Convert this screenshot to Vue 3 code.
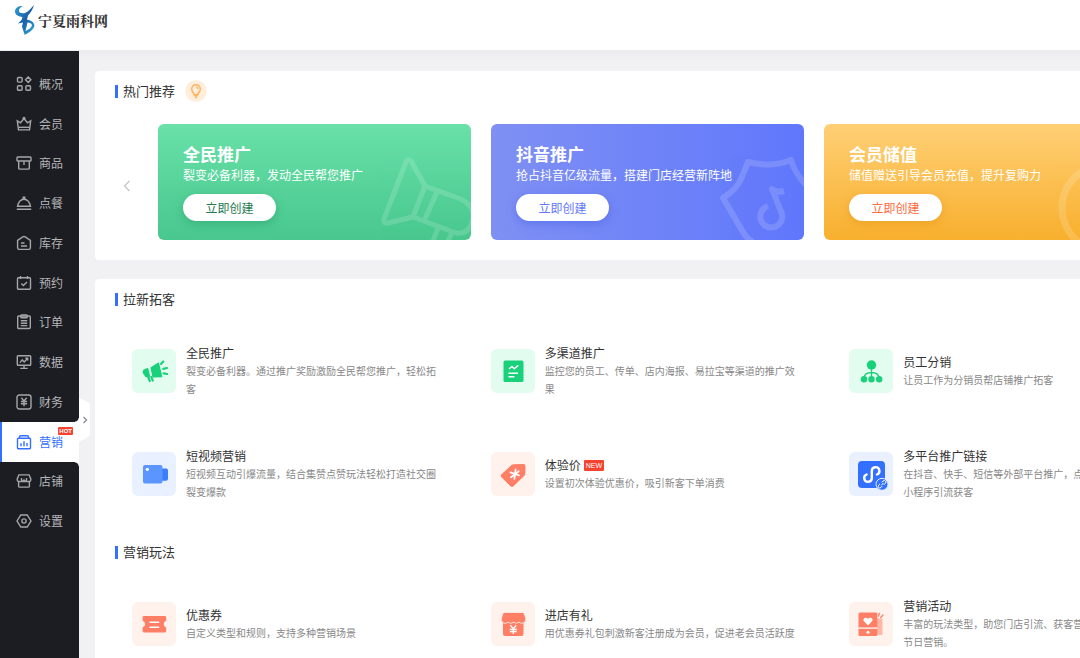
<script setup>
const nav = [
  { label: '概况', icon: '<rect x="1.5" y="1.5" width="4.6" height="4.6" rx="1"/><path d="M12.2 1l2.7 2.8-2.7 2.8-2.7-2.8z"/><rect x="1.5" y="9.7" width="4.6" height="4.6" rx="1"/><rect x="9.9" y="9.7" width="4.6" height="4.6" rx="1"/>' },
  { label: '会员', icon: '<path d="M1.3 4.8l3.2 2L8 2.6l3.5 4.2 3.2-2-1.2 9.1h-11z"/><path d="M2.4 11.3h11.2"/><circle cx="8" cy="2.3" r=".9"/>' },
  { label: '商品', icon: '<rect x="1" y="2" width="14" height="4" rx=".8"/><path d="M2.7 6v7.2q0 .9.9.9h8.8q.9 0 .9-.9V6M8 6.5v3.4"/>' },
  { label: '点餐', icon: '<path d="M1.5 11.3C2.5 7 5 4.3 8 4.3s5.500 2.700 6.500 7zM.8 14.300h14.400"/><circle cx="8" cy="2.900" r="1"/>' },
  { label: '库存', icon: '<path d="M1.600 5.300L6.800 1.900q1.200-.7 2.400 0l5.200 3.400v7.500q0 1.600-1.600 1.600H3.200q-1.600 0-1.600-1.600z"/><path d="M5 8h3.500M5 11h6"/>' },
  { label: '预约', icon: '<rect x="1.500" y="2.800" width="13" height="11.500" rx="1"/><path d="M4.500 1v3M11.500 1v3M5.300 8.500l2.100 2.100 3.600-3.500"/>' },
  { label: '订单', icon: '<rect x="1.700" y="2" width="12.600" height="12.500" rx="1"/><rect x="4.800" y="1" width="6.400" height="2.800" rx=".8"/><path d="M4.800 6.800h6.400M4.800 9.200h6.400M4.800 11.600h6.400"/>' },
  { label: '数据', icon: '<rect x="1.300" y="1.700" width="13.400" height="9.600" rx=".8"/><path d="M8 11.500v2.700M4.300 14.400h7.400M4 8.600l2.300-2.700 1.900 2 3.300-3.400M9.300 4.200h2.400v2.300"/>' },
  { label: '财务', icon: '<rect x="1" y="1" width="14" height="14" rx="2.200"/><path d="M5.300 3.800L8 7l2.700-3.200M4.900 7.500h6.200M4.900 9.800h6.200M8 7v5.300"/>' },
  { label: '营销', active: true, icon: '<rect x="1.500" y="4.200" width="13" height="10.500" rx="1"/><path d="M3.400 4V3.200q0-1.500 1.500-1.500h6.200q1.500 0 1.500 1.500V4M5 9.300v3M8 7.300v5M11 9v3.300"/>' },
  { label: '店铺', icon: '<path d="M2.900 1.900h10.200l1.700 4v1.200q0 1.400-1.400 1.400H2.600q-1.400 0-1.400-1.400V5.900z"/><path d="M2.600 8.700v4.200q0 1.200 1.200 1.200h8.400q1.200 0 1.200-1.200V8.700M5.500 5v2q0 1 1 1t1.500-1q.5 1 1.500 1t1-1V5"/>' },
  { label: '设置', icon: '<path d="M4.800 2h6.400L15 8l-3.800 6H4.800L1 8z"/><circle cx="8" cy="8" r="2.100"/>' }
]

const hot = [
  {
    tone: 'green', title: '全民推广', text: '裂变必备利器，发动全民帮您推广',
    art: '<g stroke-width="5"><path d="M267 62L253 37q-3-3-5 1l-22 57q-1 5 4 4l25-6z"/><path d="M267 62l33 12q16 6 15 20-3 17-17 15l-43-16"/><path d="M279 68l-12 27M280 104l-5 13M294 109l-4 8"/></g>'
  },
  {
    tone: 'blue', title: '抖音推广', text: '抢占抖音亿级流量，搭建门店经营新阵地',
    art: '<path stroke-width="6" d="M262 118q-6-3-10-10l-20-34q14-9 18-19l7-17q24 6 43-2 4 14 16 26"/><path stroke-width="6" d="M277 82a11 11 0 1 0 14 8l-10-25q5 4 12 2"/>'
  },
  {
    tone: 'orange', title: '会员储值', text: '储值赠送引导会员充值，提升复购力',
    art: '<circle cx="281" cy="84" r="43" stroke-width="7"/><path stroke-width="6" d="M266 62l15 18 15-18M262 84h38M262 98h38M281 82v34"/>'
  }
]

const megaphone = '<g fill="#19d17b" stroke="#19d17b" stroke-linecap="round" stroke-linejoin="round"><path stroke-width="1.600" d="M19.300 18.800l7-4.500 3.200 13.200-8.300.3z"/><path stroke-width="1.600" d="M11.800 21.500l3.700-1.700 1.900 7.300-3.400.3-2.600-3.900z"/><path stroke-width="2.200" d="M16 27.500l1.800 4.500M19.300 28l1.500 3.600M29 15l2.200-2.400M31.300 19.800l3.700-.8M31.500 24.300l3.600.7"/></g>'
const report = '<rect x="12.500" y="11.500" width="20" height="21.500" rx="1.500" fill="#19d17b"/><path d="M18 20l3-2.500 2.300 2.300 4-3.600M17.500 24.300h9.500M17.500 27.700h6" stroke="#fff" stroke-width="1.400" fill="none"/>'
const team = '<g fill="#19d17b"><circle cx="22.500" cy="16" r="4.700"/><circle cx="15" cy="30.300" r="3.200"/><circle cx="22.500" cy="30.300" r="3.200"/><circle cx="30.200" cy="30.300" r="3.200"/></g><path d="M22.500 18v12M15 29q.5-5.500 7.500-5.500T30.200 29" fill="none" stroke="#19d17b" stroke-width="1.300"/>'
const video = '<rect x="29" y="16.500" width="7" height="12.300" rx="2" fill="#3b7dfa"/><rect x="11" y="13" width="19.500" height="18.500" rx="2" fill="#5b95ff"/><circle cx="15.300" cy="17.300" r="1.600" fill="#fff"/>'
const tag = '<path d="M10.500 22.300l9.700-9q1.200-1.100 2.800-1.100l9.300-.2q2.200 0 2.200 2.200l-.2 7q0 1.600-1.200 2.700l-10.600 10.400q-1.500 1.400-3 0l-9-9q-1.500-1.500 0-3z" fill="#ff7f66"/><path d="M24.600 17.300l-1.200 9.500M19.500 20.400l8.500 3M20 25.300l7.700-6" stroke="#fff" stroke-width="1.800" stroke-linecap="round"/>'
const link = '<rect x="9" y="9" width="27" height="27" rx="4" fill="#3370ff"/><path d="M17.600 22.500a3.800 3.800 0 1 0 5.200 3.500V19a3.800 3.800 0 1 1 5.200 3.500" fill="none" stroke="#fff" stroke-width="2.400" stroke-linecap="round"/><circle cx="33" cy="32.300" r="6" fill="#3370ff" stroke="#e8efff" stroke-width="1"/><path d="M32.300 33.300l2.200-2.400M32.800 30.300l1.300-1.300a1.600 1.600 0 0 1 2.300 2.300l-1.500 1.500M33.300 34l-1.400 1.500a1.600 1.600 0 0 1-2.300-2.300l1.400-1.400" fill="none" stroke="#fff" stroke-width="1"/>'
const coupon = '<path d="M12 14h21q1.200 0 1.200 1.200v3.600a3.500 3.500 0 0 0 0 6.700v3.600q0 1.400-1.200 1.400H12q-1.400 0-1.400-1.400v-3.600a3.500 3.500 0 0 0 0-6.700v-3.600Q10.600 14 12 14z" fill="#ff7f66"/><path d="M17.500 20.200h9.700M17.500 25.200h9.700" stroke="#fff" stroke-width="1.600"/>'
const shop = '<path d="M12 21h20.500v11q0 2-2 2H14q-2 0-2-2z" fill="#ff7f66"/><path d="M13.500 10.500h18q1 0 1.500.8l1.700 4.500q.8 3-1.700 5-2.700 1.400-5-.6-2.500 2.400-5.300 0-3 2.400-5.500 0-2.700 2.200-5.200.6-2.500-2-1.600-5l1.600-4.500q.5-.8 1.500-.8z" fill="#ff7f66" stroke="#fff1ec" stroke-width=".8"/><path d="M19.300 23.300l3 3.400 3-3.400M18.800 27.500h7M18.800 29.700h7M22.300 27v5" fill="none" stroke="#fff" stroke-width="1.300"/>'
const event = '<rect x="24" y="16.500" width="9.500" height="16.500" rx="1" fill="#ffb8a8"/><rect x="9.500" y="10.500" width="18.800" height="23.500" rx="1.500" fill="#ff7f66"/><path d="M19 23.500l-4-4.200c-2-2.600 1.800-5.200 4-2.500 2.200-2.700 6-.1 4 2.500z" fill="#fff"/><path d="M9.500 26.200h18.800" stroke="#fff" stroke-width="1.200"/><circle cx="19" cy="30.300" r="1.500" fill="#fff"/><path d="M29.500 14l.8-2.600M31.700 15.500l2.300-2.400" stroke="#ff7f66" stroke-width="1.400" stroke-linecap="round"/>'

const sections = [
  {
    title: '拉新拓客',
    items: [
      { title: '全民推广', text: '裂变必备利器。通过推广奖励激励全民帮您推广，轻松拓客', tone: 'mint', icon: megaphone },
      { title: '多渠道推广', text: '监控您的员工、传单、店内海报、易拉宝等渠道的推广效果', tone: 'mint', icon: report },
      { title: '员工分销', text: '让员工作为分销员帮店铺推广拓客', tone: 'mint', icon: team },
      { title: '短视频营销', text: '短视频互动引爆流量，结合集赞点赞玩法轻松打造社交圈裂变爆款', tone: 'sky', icon: video },
      { title: '体验价', badge: 'NEW', text: '设置初次体验优惠价，吸引新客下单消费', tone: 'peach', icon: tag },
      { title: '多平台推广链接', text: '在抖音、快手、短信等外部平台推广，点击即可打开您的小程序引流获客', tone: 'sky', icon: link }
    ]
  },
  {
    title: '营销玩法',
    items: [
      { title: '优惠券', text: '自定义类型和规则，支持多种营销场景', tone: 'peach', icon: coupon },
      { title: '进店有礼', text: '用优惠券礼包刺激新客注册成为会员，促进老会员活跃度', tone: 'peach', icon: shop },
      { title: '营销活动', text: '丰富的玩法类型，助您门店引流、获客营销促活，玩转各节日营销。', tone: 'peach', icon: event }
    ]
  }
]
</script>

<template>
  <div class="page">
    <header class="top">
      <a href="#" class="brand">
        <svg width="22" height="32" viewBox="0 0 22 32" aria-hidden="true">
          <defs>
            <linearGradient id="brandFill" x1="0" y1="0" x2="1" y2="1">
              <stop offset="0" stop-color="#2ba3dc" />
              <stop offset=".5" stop-color="#1b5fa8" />
              <stop offset="1" stop-color="#2fb0e0" />
            </linearGradient>
          </defs>
          <g fill="url(#brandFill)">
            <path d="M8.500 2C4 2 1 4 1 7.500c0 3 3 5 7.500 5.500l-1 3L4 19.500l5-1-1 4 2.500 8 2-7.500 1-4.500c2.500.2 4 1 4.500 2.500-.3 2.500-3 4.500-6.500 6l-1 4c5-2.500 9-5 10-9.500-.5-3.500-3.500-5-7.500-6l1-4C17 8 19 5 20 1c-3 3-5 6.500-9 8-3 .5-5.500 0-6-1.500C4.500 5 6 3.500 8.500 2z" />
          </g>
        </svg>
        <span>宁夏雨科网</span>
      </a>
    </header>

    <div class="body">
      <aside class="side">
        <nav>
          <a v-for="n in nav" :key="n.label" href="#" :class="{ active: n.active }">
            <svg width="16" height="16" viewBox="0 0 16 16" aria-hidden="true" v-html="n.icon"></svg>
            <span>{{ n.label }}</span>
            <em v-if="n.active">HOT</em>
          </a>
        </nav>
        <button class="fold" aria-label="展开菜单">
          <svg width="11" height="44" viewBox="0 0 11 44">
            <path d="M0 0l9 4q2 1 2 3v29q0 2-2 3l-9 5z" fill="#fff" />
            <path d="M4.500 19l3 3-3 3" fill="none" stroke="#888b91" stroke-width="1.300" />
          </svg>
        </button>
      </aside>

      <main>
        <section class="panel">
          <div class="head">
            <h2>热门推荐</h2>
            <svg width="22" height="22" viewBox="0 0 22 22" aria-hidden="true">
              <circle cx="11" cy="11" r="10.800" fill="#ffeedb" />
              <path d="M9 13.500Q6.700 12 6.700 9a4.300 4.300 0 0 1 8.600 0q0 3-2.300 4.500v1.300H9z" fill="none" stroke="#ffb25e" stroke-width="1.500" />
              <path d="M11.300 7.300q1.500.2 1.600 1.700M9.300 15.800h3.400M10 17.500h2" fill="none" stroke="#ffb25e" stroke-width="1.400" />
            </svg>
          </div>
          <div class="carousel">
            <button class="prev" aria-label="上一页">
              <svg width="8" height="12" viewBox="0 0 8 12"><path d="M6.500 1L1.500 6l5 5" fill="none" stroke="#c4c6ca" stroke-width="1.300" /></svg>
            </button>
            <article v-for="h in hot" :key="h.title" class="card" :class="h.tone">
              <svg class="art" width="313" height="116" viewBox="0 0 313 116" aria-hidden="true" v-html="h.art"></svg>
              <h3>{{ h.title }}</h3>
              <p>{{ h.text }}</p>
              <button>立即创建</button>
            </article>
          </div>
        </section>

        <div class="panel">
          <section v-for="s in sections" :key="s.title" class="group">
            <div class="head"><h2>{{ s.title }}</h2></div>
            <div class="grid">
              <a v-for="i in s.items" :key="i.title" href="#" class="item">
                <svg class="tile" :class="i.tone" width="44" height="44" viewBox="0 0 44 44" aria-hidden="true" v-html="i.icon"></svg>
                <div>
                  <h3>{{ i.title }}<em v-if="i.badge">{{ i.badge }}</em></h3>
                  <p>{{ i.text }}</p>
                </div>
              </a>
            </div>
          </section>
        </div>
      </main>
    </div>
  </div>
</template>

<style>
body {
  margin: 0;
  overflow: hidden;
}
</style>

<style scoped>
.page {
  display: flex;
  flex-direction: column;
  height: 100vh;
  overflow: hidden;
  background: #f1f1f3;
  color: #333;
  font: 12px/18px "Noto Sans CJK SC", sans-serif;
}
h2, h3, p {
  margin: 0;
  font-weight: 400;
}
a {
  color: inherit;
  text-decoration: none;
}
button {
  border: 0;
  padding: 0;
  font: inherit;
  cursor: pointer;
}
em {
  font-style: normal;
}
.top {
  flex: none;
  display: flex;
  align-items: center;
  height: 50px;
  padding: 0 14px;
  box-sizing: border-box;
  background: #fff;
}
.brand {
  display: flex;
  align-items: center;
  gap: 2px;
  margin-bottom: 10px;
  color: #333;
  font: 700 14px/20px "Noto Serif CJK SC", "Noto Sans CJK SC", serif;
}
.body {
  flex: 1;
  display: flex;
  min-height: 0;
  box-shadow: inset 0 10px 10px -8px #e7e8ea;
}
.side {
  position: relative;
  flex: none;
  width: 79px;
  margin-top: 1px;
  padding-top: 13px;
  box-sizing: border-box;
  background: #1c1d22;
}
.side nav {
  display: grid;
  grid-auto-rows: 1fr;
  height: 477px;
}
.side nav a {
  position: relative;
  display: flex;
  align-items: center;
  gap: 7px;
  padding-left: 16px;
  color: #b4b5b8;
  line-height: 12px;
}
.side nav svg {
  fill: none;
  stroke: #a5a6a9;
  stroke-width: 1.4;
}
.side nav a.active {
  background: #fff;
  color: #3370ff;
  box-shadow: inset 2px 0 #3370ff;
}
.side nav a.active svg {
  stroke: #3370ff;
}
.side nav a.active::before,
.side nav a.active::after {
  content: "";
  position: absolute;
  right: 0;
  width: 4px;
  height: 4px;
}
.side nav a.active::before {
  bottom: 100%;
  background: radial-gradient(circle at 0 0, transparent 3px, #fff 4px);
}
.side nav a.active::after {
  top: 100%;
  background: radial-gradient(circle at 0 100%, transparent 3px, #fff 4px);
}
.side em {
  position: absolute;
  top: 5px;
  right: 6px;
  padding: 0 1px;
  border-radius: 1px;
  background: #f5432f;
  color: #fff;
  font: 700 6px/8px "Liberation Sans", sans-serif;
}
.fold {
  position: absolute;
  top: 347px;
  left: 100%;
  width: 11px;
  height: 44px;
  background: none;
}
.fold svg {
  display: block;
}
main {
  flex: 1 0 1182px;
  display: flex;
  flex-direction: column;
  gap: 19px;
  box-sizing: border-box;
  padding: 21px 16px 0;
}
.panel {
  padding: 11px 0 20px;
  border-radius: 4px;
  background: #fff;
}
.head {
  display: flex;
  align-items: center;
  gap: 10px;
  height: 18px;
  padding-left: 20px;
}
.head h2 {
  display: flex;
  align-items: center;
  gap: 5px;
  font-size: 13px;
}
.head h2::before {
  content: "";
  width: 3px;
  height: 13px;
  background: #3370ff;
}
.carousel {
  display: flex;
  align-items: center;
  gap: 20px;
  margin-top: 24px;
  padding-left: 28px;
}
.prev {
  width: 15px;
  height: 24px;
  margin-top: 8px;
  background: none;
}
.prev svg {
  display: block;
}
.card {
  position: relative;
  flex: none;
  width: 313px;
  padding: 18px 25px 19px;
  box-sizing: border-box;
  border-radius: 6px;
  overflow: hidden;
  color: #fff;
}
.green {
  background: linear-gradient(#69e1a8, #48c78e);
  --ink: #23794f;
  --shade: #2c9c6a80;
}
.blue {
  background: linear-gradient(90deg, #7f90f3, #6077fc);
  --ink: #6478fa;
  --shade: #4a5fe580;
}
.orange {
  background: linear-gradient(#ffcf75, #f8b02e);
  --ink: #ff6a3c;
  --shade: #e8941880;
}
.art {
  position: absolute;
  inset: 0;
  fill: none;
  stroke: #fff;
  stroke-linejoin: round;
  opacity: .15;
}
.card h3 {
  position: relative;
  font: 700 17px/24px "Noto Sans CJK SC", sans-serif;
}
.card p {
  position: relative;
}
.card button {
  position: relative;
  display: block;
  width: 93px;
  height: 27px;
  margin-top: 10px;
  border-radius: 14px;
  background: #fff;
  color: var(--ink);
  box-shadow: 0 3px 8px var(--shade);
}
.group + .group {
  margin-top: 42px;
}
.grid {
  display: grid;
  grid-template-columns: repeat(3, 1fr);
  grid-auto-rows: minmax(54px, auto);
  row-gap: 49px;
  margin-top: 36px;
  padding: 0 37px;
}
.item {
  display: flex;
  align-items: center;
  gap: 10px;
  padding-right: 50px;
}
.tile {
  flex: none;
  border-radius: 6px;
}
.mint {
  background: #e2fcf0;
}
.sky {
  background: #e9f0ff;
}
.peach {
  background: #fff1ec;
}
.item h3 {
  display: flex;
  align-items: center;
  gap: 3px;
  font-size: 12px;
}
.item em {
  padding: 0 2px;
  border-radius: 1px;
  background: #f5432f;
  color: #fff;
  font: 7px/11px "Liberation Sans", sans-serif;
}
.item p {
  color: #888;
  font-size: 10px;
}
</style>
